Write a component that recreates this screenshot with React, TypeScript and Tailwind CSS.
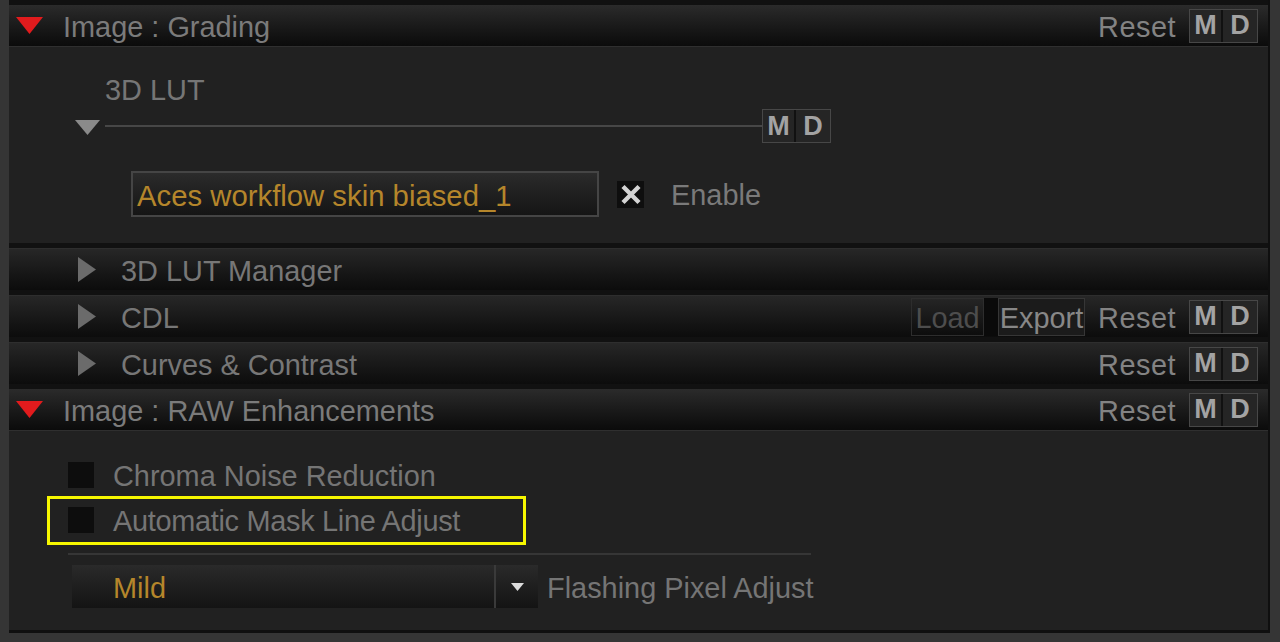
import React from "react";

const FONT = "font-['Liberation_Sans',Arial,sans-serif]";

function RedArrow() {
  return (
    <svg width="27" height="17" viewBox="0 0 27 17" className="shrink-0">
      <polygon points="0,0 27,0 13.5,17" fill="#e11b1d" />
    </svg>
  );
}

function GrayRight() {
  return (
    <svg width="18" height="25" viewBox="0 0 18 25" className="shrink-0">
      <polygon points="0,0 18,12.5 0,25" fill="#6b6b6b" />
    </svg>
  );
}

function MD() {
  return (
    <div className="flex h-[34px] border border-[#474747] bg-[#111]">
      <div className="w-[33px] h-full flex items-center justify-center bg-[#252525] border-r-2 border-[#111] text-[27px] font-bold text-[#a3a3a3] leading-none">
        M
      </div>
      <div className="w-[34px] h-full flex items-center justify-center bg-[#252525] text-[27px] font-bold text-[#a3a3a3] leading-none">
        D
      </div>
    </div>
  );
}

function Reset() {
  return <span className="text-[#838383] mr-[13px] mt-[3px] tracking-[0.5px]">Reset</span>;
}

function MainHeader({ title }: { title: string }) {
  return (
    <div className="h-[42px] shrink-0 flex items-center bg-linear-to-b from-[#2b2b2b] to-[#0b0b0b] border-b border-[#2f2f2f] pl-[7px] pr-[10px]">
      <RedArrow />
      <span className="ml-[20px] mt-[3px] text-[#7b7b7b]">{title}</span>
      <div className="ml-auto flex items-center">
        <Reset />
        <MD />
      </div>
    </div>
  );
}

function SubHeader({ title, right }: { title: string; right?: React.ReactNode }) {
  return (
    <div className="h-[42px] shrink-0 flex items-center bg-linear-to-b from-[#272727] to-[#0c0c0c] border-t border-[#2e2e2e] pl-[69px] pr-[10px]">
      <GrayRight />
      <span className="ml-[25px] mt-[3px] text-[#777]">{title}</span>
      {right && <div className="ml-auto flex items-center">{right}</div>}
    </div>
  );
}

export default function App() {
  return (
    <div className={`w-[1280px] h-[642px] overflow-hidden bg-[#353535] pl-[9px] pr-[10px] pb-[9px] text-[28.9px] leading-none ${FONT}`}>
      <div className="h-full flex flex-col gap-[5px] bg-[#111] pt-[5px] border-r-2 border-b-[3px] border-[#0f0f0f]">
        <div className="flex flex-col">
          <MainHeader title="Image : Grading" />
          {/* 3D LUT block */}
          <div className="h-[196px] bg-[#212121] pt-[30px]">
            <div className="pl-[96px] text-[#767676] h-[26px] flex items-center">3D LUT</div>
            <div className="mt-[6px] h-[34px] flex items-center pl-[66px]">
              <svg width="25" height="15" viewBox="0 0 25 15" className="shrink-0 mt-[2px]">
                <polygon points="0,0 25,0 12.5,15" fill="#8a8a8a" />
              </svg>
              <div className="w-[657px] h-[2px] bg-[#474747] ml-[5px]" />
              <MD />
            </div>
            <div className="mt-[28px] flex items-center pl-[122px]">
              <div className="w-[468px] h-[46px] border-2 border-[#454545] bg-linear-to-b from-[#2b2b2b] to-[#151515] flex items-center pl-[4px] pt-[3px] text-[#b5862b] text-[29.3px]">
                Aces workflow skin biased_1
              </div>
              <div className="ml-[18px] w-[27px] h-[27px] bg-[#0e0e0e] flex items-center justify-center">
                <svg width="22" height="21" viewBox="0 0 22 21">
                  <path d="M3 2.5 L19 18.5 M19 2.5 L3 18.5" stroke="#d4d4d4" strokeWidth="4.4" />
                </svg>
              </div>
              <span className="ml-[27px] mt-[3px] text-[#7a7a7a]">Enable</span>
            </div>
          </div>
        </div>

        <SubHeader title="3D LUT Manager" />
        <SubHeader
          title="CDL"
          right={
            <>
              <div className="h-[38px] w-[73px] border border-[#2d2d2d] flex items-center justify-center pt-[3px] text-[#4d4d4d]">
                Load
              </div>
              <div className="w-[14px] h-[38px] bg-[#0a0a0a]" />
              <div className="h-[38px] w-[87px] border border-[#363636] bg-[#1b1b1b] flex items-center justify-center pt-[3px] text-[#878787] mr-[13px]">
                Export
              </div>
              <Reset />
              <MD />
            </>
          }
        />
        <SubHeader
          title="Curves & Contrast"
          right={
            <>
              <Reset />
              <MD />
            </>
          }
        />

        <div className="flex-1 flex flex-col">
          <MainHeader title="Image : RAW Enhancements" />
          <div className="flex-1 bg-[#212121] pt-[31px] pl-[59px]">
            <div className="h-[26px] flex items-center">
              <div className="w-[26px] h-[26px] bg-[#0d0d0d]" />
              <span className="ml-[19px] mt-[3px] text-[#757575]">Chroma Noise Reduction</span>
            </div>
            <div className="relative mt-[19px] h-[26px] flex items-center">
              <div className="w-[26px] h-[26px] bg-[#0d0d0d]" />
              <span className="ml-[19px] mt-[3px] text-[#757575] tracking-[-0.3px]">Automatic Mask Line Adjust</span>
              <div className="absolute -left-[21px] -top-[11px] w-[479px] h-[49px] border-[3px] border-[#f7f700]" />
            </div>
            <div className="mt-[20px] w-[743px] h-[2px] bg-[#363636]" />
            <div className="mt-[10px] ml-[4px] flex items-center">
              <div className="w-[466px] h-[43px] flex bg-linear-to-b from-[#2a2a2a] to-[#141414]">
                <div className="w-[424px] h-full flex items-center pl-[41px] pt-[3px] text-[#b5862b] border-r-2 border-[#3a3a3a]">
                  Mild
                </div>
                <div className="flex-1 flex items-center justify-center">
                  <svg width="13" height="8" viewBox="0 0 13 8">
                    <polygon points="0,0 13,0 6.5,8" fill="#dcdcdc" />
                  </svg>
                </div>
              </div>
              <span className="ml-[9px] mt-[3px] text-[#757575]">Flashing Pixel Adjust</span>
            </div>
          </div>
        </div>
      </div>
    </div>
  );
}
